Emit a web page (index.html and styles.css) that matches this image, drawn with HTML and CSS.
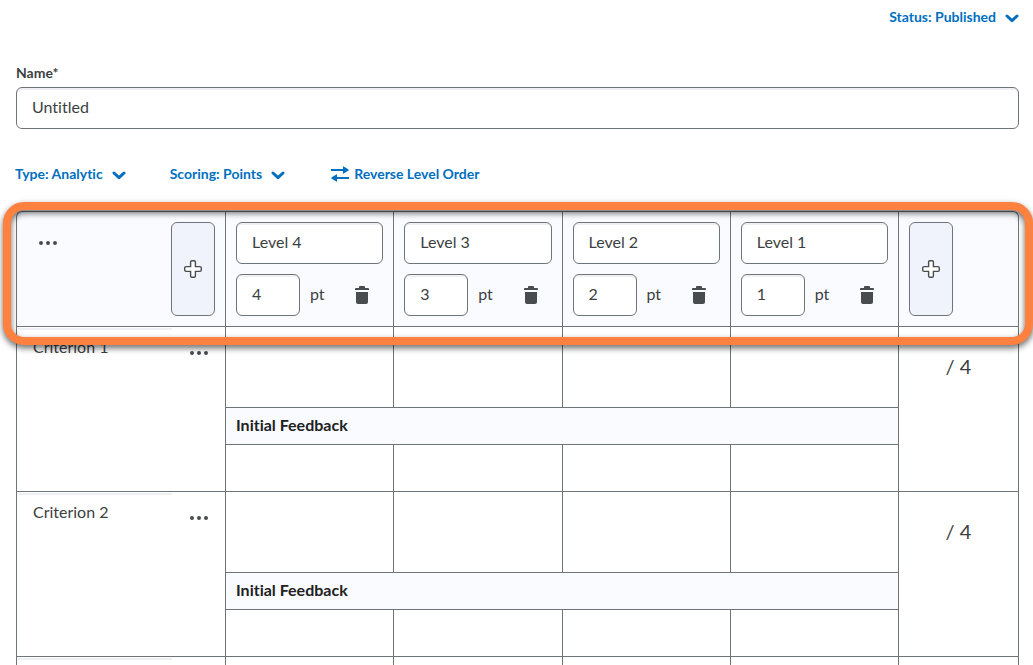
FILE: index.html
```html
<!DOCTYPE html>
<html lang="en">
<head>
<meta charset="utf-8">
<title>Edit Rubric</title>
<link rel="stylesheet" href="styles.css">
</head>
<body>
<svg class="sprite" aria-hidden="true">
  <symbol id="chevron" viewBox="0 0 14 9"><path d="M2 2l5 4.600L12 2" fill="none" stroke="currentColor" stroke-width="3" stroke-linecap="round" stroke-linejoin="round"/></symbol>
  <symbol id="swap" viewBox="0 0 18 16"><path d="M0 3h12V0.600Q12 0 12.700 0.400L17.600 3.500Q18 4 17.600 4.500L12.700 7.600Q12 8 12 7.400V5H0zM18 11H6V8.600Q6 8 5.300 8.400L0.400 11.500Q0 12 0.400 12.500L5.300 15.600Q6 16 6 15.400V13h12z" fill="currentColor"/></symbol>
  <symbol id="dots" viewBox="0 0 18 4"><circle cx="2" cy="2" r="2"/><circle cx="9" cy="2" r="2"/><circle cx="16" cy="2" r="2"/></symbol>
  <symbol id="plus" viewBox="0 0 18 18"><path d="M8 .700h2a1.400 1.400 0 0 1 1.400 1.400v4.500h4.500A1.400 1.400 0 0 1 17.300 8v2a1.400 1.400 0 0 1-1.400 1.400h-4.500v4.500a1.400 1.400 0 0 1-1.400 1.400H8a1.400 1.400 0 0 1-1.400-1.400v-4.500H2.100A1.400 1.400 0 0 1 .700 10V8a1.400 1.400 0 0 1 1.400-1.400h4.500V2.100A1.400 1.400 0 0 1 8 .700z" fill="#fff" stroke="currentColor" stroke-width="1.400"/></symbol>
  <symbol id="trash" viewBox="0 0 14 18"><path d="M1 2h3V1a1 1 0 0 1 1-1h4a1 1 0 0 1 1 1v1h3a1 1 0 0 1 1 1v1H0V3a1 1 0 0 1 1-1zM1 6h12v10a2 2 0 0 1-2 2H3a2 2 0 0 1-2-2z" fill="currentColor"/></symbol>
</svg>
<main class="page">
  <div class="status-bar">
    <button class="link-button" type="button">Status: Published <svg class="chevron"><use href="#chevron"/></svg></button>
  </div>
  <div class="field">
    <label class="label" for="name">Name*</label>
    <input class="input" id="name" type="text" value="Untitled">
  </div>
  <div class="toolbar">
    <button class="link-button" type="button">Type: Analytic <svg class="chevron"><use href="#chevron"/></svg></button>
    <button class="link-button" type="button">Scoring: Points <svg class="chevron"><use href="#chevron"/></svg></button>
    <button class="link-button reverse" type="button"><svg class="swap"><use href="#swap"/></svg>Reverse Level Order</button>
  </div>
  <div class="rubric-wrap">
    <table class="rubric">
      <colgroup><col class="col-criterion"><col><col><col><col><col class="col-score"></colgroup>
      <thead>
        <tr>
          <th class="first"><div class="corner">
            <button class="dots-button" type="button" aria-label="Criteria group actions"><svg class="dots"><use href="#dots"/></svg></button>
            <button class="add" type="button" aria-label="Add level at start"><svg class="plus"><use href="#plus"/></svg></button>
          </div></th>
          <th><div class="level">
            <input class="input" type="text" aria-label="Level name" value="Level 4">
            <div class="points"><input class="input short" id="p4" type="text" value="4"><label class="unit" for="p4">pt</label><button class="delete" type="button" aria-label="Delete level 4"><svg class="trash"><use href="#trash"/></svg></button></div>
          </div></th>
          <th><div class="level">
            <input class="input" type="text" aria-label="Level name" value="Level 3">
            <div class="points"><input class="input short" id="p3" type="text" value="3"><label class="unit" for="p3">pt</label><button class="delete" type="button" aria-label="Delete level 3"><svg class="trash"><use href="#trash"/></svg></button></div>
          </div></th>
          <th><div class="level">
            <input class="input" type="text" aria-label="Level name" value="Level 2">
            <div class="points"><input class="input short" id="p2" type="text" value="2"><label class="unit" for="p2">pt</label><button class="delete" type="button" aria-label="Delete level 2"><svg class="trash"><use href="#trash"/></svg></button></div>
          </div></th>
          <th><div class="level">
            <input class="input" type="text" aria-label="Level name" value="Level 1">
            <div class="points"><input class="input short" id="p1" type="text" value="1"><label class="unit" for="p1">pt</label><button class="delete" type="button" aria-label="Delete level 1"><svg class="trash"><use href="#trash"/></svg></button></div>
          </div></th>
          <th class="last"><div class="level"><button class="add" type="button" aria-label="Add level at end"><svg class="plus"><use href="#plus"/></svg></button></div></th>
        </tr>
      </thead>
      <tbody>
        <tr class="description">
          <td rowspan="3"><div class="criterion"><textarea class="criterion-name" aria-label="Criterion name" rows="2">Criterion 1</textarea><button class="dots-button" type="button" aria-label="Criterion 1 actions"><svg class="dots"><use href="#dots"/></svg></button></div></td>
          <td></td><td></td><td></td><td></td>
          <td class="last score" rowspan="3">/ 4</td>
        </tr>
        <tr><th class="feedback-title" colspan="4">Initial Feedback</th></tr>
        <tr class="feedback"><td></td><td></td><td></td><td></td></tr>
      </tbody>
      <tbody>
        <tr class="description">
          <td rowspan="3"><div class="criterion"><textarea class="criterion-name" aria-label="Criterion name" rows="2">Criterion 2</textarea><button class="dots-button" type="button" aria-label="Criterion 2 actions"><svg class="dots"><use href="#dots"/></svg></button></div></td>
          <td></td><td></td><td></td><td></td>
          <td class="last score" rowspan="3">/ 4</td>
        </tr>
        <tr><th class="feedback-title" colspan="4">Initial Feedback</th></tr>
        <tr class="feedback"><td></td><td></td><td></td><td></td></tr>
      </tbody>
      <tbody>
        <tr class="description">
          <td><div class="criterion"><textarea class="criterion-name" aria-label="Criterion name" rows="2"></textarea><button class="dots-button" type="button" aria-label="Criterion 3 actions"><svg class="dots"><use href="#dots"/></svg></button></div></td>
          <td></td><td></td><td></td><td></td>
          <td class="last"></td>
        </tr>
      </tbody>
    </table>
    <div class="highlight"></div>
  </div>
</main>
</body>
</html>
```
FILE: styles.css
```css
* { box-sizing: border-box; }
body {
  margin: 0;
  background: #fff;
  color: #3c3f41;
  font: 16px/24px Lato, sans-serif;
}
body, button, input, textarea { font-variant-ligatures: none; }
button, input, textarea { font-family: inherit; font-size: inherit; font-weight: inherit; line-height: inherit; color: inherit; }
button { padding: 0; border: 0; background: none; }
svg { flex: none; }
.sprite { position: absolute; width: 0; height: 0; }
.page {
  height: 100vh;
  overflow: hidden;
  padding: 6px 14px 0 16px;
}
.status-bar { display: flex; justify-content: flex-end; }
.link-button {
  display: flex;
  align-items: center;
  gap: 9px;
  color: #006fbf;
  font-size: 14px;
  font-weight: 700;
  line-height: 22px;
}
.chevron { width: 14px; height: 9px; margin-top: 3px; }
.swap { width: 18px; height: 16px; }
.field { display: flex; flex-direction: column; margin-top: 36px; }
.label { font-size: 14px; font-weight: 700; line-height: 18px; margin-bottom: 5px; }
.input {
  display: block;
  width: 100%;
  height: 42px;
  padding: 0 15px 3px;
  border: 1px solid #6e7477;
  border-radius: 6px;
  background: #fff;
  box-shadow: inset 0 2px 0 #eff0f3;
}
.toolbar { display: flex; gap: 44px; margin: 34px 0 0 -1px; }
.toolbar .reverse { gap: 5px; margin-left: 2px; }
.rubric-wrap { position: relative; margin-top: 26px; }
.rubric {
  width: 100%;
  table-layout: fixed;
  border-spacing: 0;
}
.col-criterion { width: 209px; }
.col-score { width: 121px; }
.rubric th, .rubric td {
  padding: 0;
  border: solid #6e7477;
  border-width: 1px 0 0 1px;
  vertical-align: top;
  text-align: left;
  font-weight: 400;
}
.rubric .last { border-right-width: 1px; }
.rubric th { background: #fafbff; }
.rubric .first { border-top-left-radius: 6px; }
.rubric thead .last { border-top-right-radius: 6px; }
.corner { display: flex; justify-content: space-between; align-items: flex-start; padding: 10px; }
.level { display: grid; gap: 10px; padding: 10px; }
.points { display: flex; align-items: center; gap: 10px; }
.input.short { width: 64px; }
.unit { padding-bottom: 2px; }
.delete { display: flex; justify-content: center; width: 42px; margin-left: auto; color: #494c4e; }
.trash { width: 14px; height: 18px; }
.add {
  display: grid;
  place-items: center;
  width: 44px;
  height: 94px;
  border: 1px solid #6e7477;
  border-radius: 6px;
  background: #f0f3fc;
  color: #494c4e;
}
.plus { width: 18px; height: 18px; }
.dots-button { display: grid; place-items: center; width: 42px; height: 42px; }
.dots { width: 18px; height: 4px; fill: #494c4e; }
.criterion { display: flex; gap: 5px; padding-right: 5px; }
.criterion .dots-button { margin-top: 5px; }
.criterion-name {
  flex: 1;
  min-width: 0;
  height: 72px;
  padding: 7px 15px;
  border: 1px solid transparent;
  background: none;
  box-shadow: inset 0 2px 0 #eff0f3;
  resize: none;
  overflow: hidden;
}
.description { height: 81px; }
.feedback { height: 47px; }
.rubric .feedback-title { padding: 5px 10px 7px; font-weight: 700; color: #202122; }
.rubric .score { padding-top: 25px; text-align: center; font-size: 20px; line-height: 28px; }
.highlight {
  position: absolute;
  top: -9px;
  left: -13px;
  right: -14px;
  height: 143px;
  border: 8px solid #ff813f;
  border-radius: 21px;
  filter: drop-shadow(0 3px 3px rgba(0, 0, 0, 0.6));
  pointer-events: none;
}
```
